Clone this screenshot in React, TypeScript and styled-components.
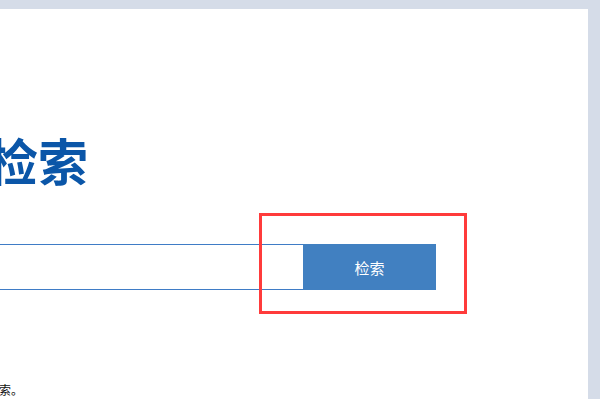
import React from "react";
import styled, { createGlobalStyle } from "styled-components";

const Global = createGlobalStyle`
  html, body {
    margin: 0;
    padding: 0;
    background: #d5dce8;
    overflow: hidden;
  }
  body {
    font-family: "Noto Sans CJK SC", "Noto Sans", sans-serif;
  }
`;

const Page = styled.div`
  padding-top: 9px;
  width: 600px;
  height: 399px;
  box-sizing: border-box;
`;

const Panel = styled.main`
  width: 588px;
  height: 390px;
  background: #ffffff;
  overflow: hidden;
  display: flex;
  flex-direction: column;
`;

const Title = styled.h1`
  margin: 120px 0 0 -12px;
  font-size: 50px;
  line-height: 60px;
  font-weight: 700;
  color: #0b56a8;
  white-space: nowrap;
  flex-shrink: 0;
`;

const SearchRow = styled.form`
  position: relative;
  margin: 55px 0 0 0;
  display: flex;
  height: 46px;
  flex-shrink: 0;
`;

const SearchInput = styled.input`
  height: 46px;
  margin-left: -20px;
  width: 323px;
  box-sizing: border-box;
  border: 1px solid #3f7cc6;
  border-right: none;
  outline: none;
  padding: 0 12px;
  font-size: 15px;
  font-family: inherit;
  background: #ffffff;
`;

const SearchButton = styled.button`
  width: 133px;
  height: 46px;
  border: none;
  background: #4180c1;
  color: #ffffff;
  font-family: "Noto Sans CJK SC", sans-serif;
  font-size: 15px;
  cursor: pointer;
  padding: 0;
`;

const Highlight = styled.div`
  position: absolute;
  left: 259px;
  top: -31px;
  width: 208px;
  height: 101px;
  box-sizing: border-box;
  border: 3px solid #ff3b3b;
  pointer-events: none;
`;

const Note = styled.p`
  margin: 91px 0 0 -97px;
  font-size: 12px;
  line-height: 18px;
  color: #111111;
  white-space: nowrap;
  flex-shrink: 0;
`;

export default function App() {
  return (
    <>
      <Global />
      <Page>
        <Panel>
          <Title>检索</Title>
          <SearchRow onSubmit={(e) => e.preventDefault()}>
            <SearchInput type="text" aria-label="检索" />
            <SearchButton type="submit">检索</SearchButton>
            <Highlight />
          </SearchRow>
          <Note>输入关键词进行检索。</Note>
        </Panel>
      </Page>
    </>
  );
}
